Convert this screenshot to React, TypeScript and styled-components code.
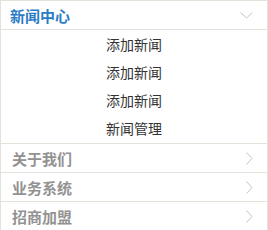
import React from "react";
import styled, { createGlobalStyle } from "styled-components";

const GlobalStyle = createGlobalStyle`
  html, body {
    margin: 0;
    padding: 0;
    background: #ffffff;
  }
  body {
    font-family: "Noto Sans CJK SC", "Noto Sans", sans-serif;
  }
`;

const subItems = ["添加新闻", "添加新闻", "添加新闻", "新闻管理"];
const sections = ["关于我们", "业务系统", "招商加盟"];

const ChevronDown = () => (
  <svg width="13" height="7" viewBox="0 0 13 7">
    <polyline points="0.5,0.5 6.5,6 12.5,0.5" fill="none" stroke="#c4c4c4" strokeWidth="1" />
  </svg>
);

const ChevronRight = () => (
  <svg width="7" height="13" viewBox="0 0 7 13">
    <polyline points="0.5,0.5 6,6.5 0.5,12.5" fill="none" stroke="#c4c4c4" strokeWidth="1" />
  </svg>
);

export default function App() {
  return (
    <>
      <GlobalStyle />
      <Menu>
        <Header>
          <HeaderTitle>新闻中心</HeaderTitle>
          <ChevronDown />
        </Header>
        <SubList>
          {subItems.map((item, i) => (
            <SubItem key={i}>{item}</SubItem>
          ))}
        </SubList>
        {sections.map((s) => (
          <Row key={s}>
            <RowTitle>{s}</RowTitle>
            <ChevronRight />
          </Row>
        ))}
      </Menu>
    </>
  );
}

const Menu = styled.div`
  width: 268px;
  box-sizing: border-box;
  border: 1px solid #e3e3dc;
  border-bottom: none;
  background: #fff;
`;

const Header = styled.div`
  height: 28px;
  display: flex;
  align-items: center;
  justify-content: space-between;
  padding: 0 14px 0 9px;
  border-bottom: 1px solid #e3e3dc;
`;

const HeaderTitle = styled.span`
  color: #2a7cc7;
  font-size: 15px;
  font-weight: bold;
  line-height: 1;
`;

const SubList = styled.div`
  display: flex;
  flex-direction: column;
  padding-bottom: 1px;
  border-bottom: 1px solid #e3e3dc;
`;

const SubItem = styled.div`
  height: 28px;
  display: flex;
  align-items: center;
  justify-content: center;
  font-size: 14px;
  line-height: 1;
  color: #333;
`;

const Row = styled.div`
  height: 28px;
  display: flex;
  align-items: center;
  justify-content: space-between;
  padding: 0 14px 0 11px;
  border-bottom: 1px solid #e3e3dc;
`;

const RowTitle = styled.span`
  color: #929292;
  font-size: 15px;
  font-weight: bold;
  line-height: 1;
`;
